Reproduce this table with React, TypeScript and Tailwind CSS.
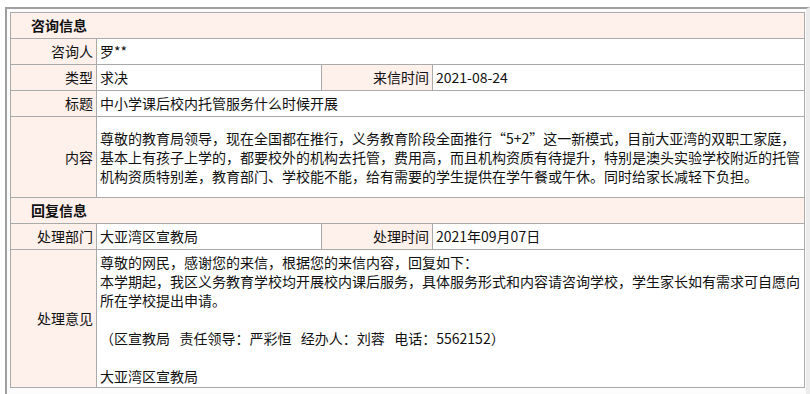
import React from 'react';

const label = 'bg-[#fef0eb] border border-[#aaaaaa] text-right pr-[3px] pl-[2px] py-[3px] align-middle whitespace-nowrap';
const value = 'bg-white border border-[#aaaaaa] pl-[3px] pr-[1px] py-[3px] align-middle';
const head = 'bg-[#fef0eb] border border-[#aaaaaa] pl-[20px] py-[3px] font-bold text-left';

export default function App() {
  return (
    <div className="h-screen bg-white overflow-hidden font-['Noto_Sans_CJK_SC','Microsoft_YaHei',sans-serif] text-[14px] leading-[19px] text-[#111]">
      {/* inset frame around the detail table, its bottom edge is cut off by the window */}
      <div className="ml-[5px] mt-[7px] h-[387px] overflow-hidden border-t-2 border-l-2 border-r-4 border-t-[#a0a0a0] border-l-[#a0a0a0] border-r-[#ececec] bg-[#fcfcfc] pt-[3px] pl-[3px] pr-[2px]">
        <table className="w-[794px] table-fixed border-collapse">
          <colgroup>
            <col className="w-[86px]" />
            <col className="w-[225px]" />
            <col className="w-[111px]" />
            <col className="w-[372px]" />
          </colgroup>
          <tbody>
            <tr>
              <td colSpan={4} className={head}>咨询信息</td>
            </tr>
            <tr>
              <td className={label}>咨询人</td>
              <td colSpan={3} className={value}>罗**</td>
            </tr>
            <tr>
              <td className={label}>类型</td>
              <td className={value}>求决</td>
              <td className={label}>来信时间</td>
              <td className={value}>2021-08-24</td>
            </tr>
            <tr>
              <td className={label}>标题</td>
              <td colSpan={3} className={value}>中小学课后校内托管服务什么时候开展</td>
            </tr>
            <tr>
              <td className={label}>内容</td>
              <td colSpan={3} className="bg-white border border-[#aaaaaa] pl-[3px] pr-0 pt-[12px] pb-[11px]">
                尊敬的教育局领导，现在全国都在推行，义务教育阶段全面推行“5+2”这一新模式，目前大亚湾的双职工家庭，<br />
                基本上有孩子上学的，都要校外的机构去托管，费用高，而且机构资质有待提升，特别是澳头实验学校附近的托管<br />
                机构资质特别差，教育部门、学校能不能，给有需要的学生提供在学午餐或午休。同时给家长减轻下负担。
              </td>
            </tr>
            <tr>
              <td colSpan={4} className={head}>回复信息</td>
            </tr>
            <tr>
              <td className={label}>处理部门</td>
              <td className={value}>大亚湾区宣教局</td>
              <td className={label}>处理时间</td>
              <td className={value}>2021年09月07日</td>
            </tr>
            <tr>
              <td className={label}>处理意见</td>
              <td colSpan={3} className="bg-white border border-[#aaaaaa] pl-[3px] pr-0 pt-[3px] pb-[1px]">
                尊敬的网民，感谢您的来信，根据您的来信内容，回复如下：<br />
                本学期起，我区义务教育学校均开展校内课后服务，具体服务形式和内容请咨询学校，学生家长如有需求可自愿向<br />
                所在学校提出申请。<br />
                <br />
                （区宣教局{'\u00a0\u00a0\u00a0'}责任领导：严彩恒{'\u00a0\u00a0\u00a0'}经办人：刘蓉{'\u00a0\u00a0\u00a0'}电话：5562152）<br />
                <br />
                大亚湾区宣教局
              </td>
            </tr>
          </tbody>
        </table>
      </div>
    </div>
  );
}
